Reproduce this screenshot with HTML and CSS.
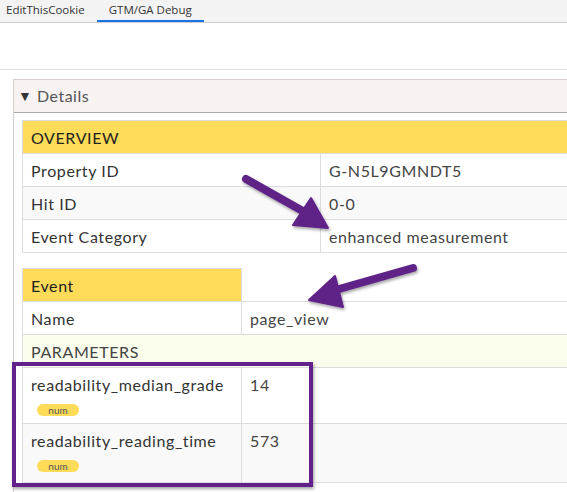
FILE: index.html
```html
<!DOCTYPE html>
<html>
<head>
    <link rel="stylesheet" href="styles.css">
</head>
<body>
    <div class="tabs">
        <div class="tab">EditThisCookie</div>
        <div class="tab active">GTM/GA Debug</div>
    </div>
    <div class="toolbar"></div>

    <div class="page">
        <div class="panel">
            <div class="panel-head"><span class="caret">&#9660;</span> Details</div>

            <table class="grid overview">
                <tr class="head"><td colspan="2">OVERVIEW</td></tr>
                <tr><td class="key">Property ID</td><td class="val">G-N5L9GMNDT5</td></tr>
                <tr class="alt"><td class="key">Hit ID</td><td class="val">0-0</td></tr>
                <tr><td class="key">Event Category</td><td class="val">enhanced measurement</td></tr>
            </table>

            <table class="grid event">
                <tr class="head"><td>Event</td><td class="blank"></td></tr>
                <tr><td class="key">Name</td><td class="val">page_view</td></tr>
                <tr class="section"><td colspan="2">PARAMETERS</td></tr>
                <tr class="param">
                    <td class="key">readability_median_grade<span class="badge">num</span></td>
                    <td class="val">14</td>
                </tr>
                <tr class="param alt last">
                    <td class="key">readability_reading_time<span class="badge">num</span></td>
                    <td class="val">573</td>
                </tr>
            </table>
        </div>

        <!-- annotations -->
        <div class="highlight"></div>
        <svg class="arrows" width="567" height="492" viewBox="0 0 567 492">
            <defs>
                <filter id="shade" x="-20%" y="-20%" width="140%" height="140%">
                    <feDropShadow dx="1" dy="2" stdDeviation="1.5" flood-color="#000" flood-opacity="0.35"/>
                </filter>
            </defs>
            <g fill="#5f2287" stroke="#5f2287" stroke-linecap="round" stroke-linejoin="round" filter="url(#shade)">
                <line x1="246" y1="179" x2="308" y2="214" stroke-width="8"/>
                <polygon points="328,228 293,225 311,198" stroke-width="2"/>
                <line x1="413" y1="268" x2="332" y2="291" stroke-width="8"/>
                <polygon points="309,300 335,276 343,307" stroke-width="2"/>
            </g>
        </svg>
    </div>
</body>
</html>
```

FILE: styles.css
```css
:root {
    --yellow: #fedb58;
    --line: #dddddd;
    --purple: #62218b;
    --text: #333333;
}
body {
    margin: 0;
    width: 567px;
    height: 492px;
    overflow: hidden;
    background: #fff;
    font-family: Lato, "Noto Sans", sans-serif;
    color: var(--text);
}
.tabs {
    display: flex;
    height: 22px;
    background: #f3f3f3;
    border-bottom: 1px solid #cccccc;
    font-family: "Open Sans", sans-serif;
    font-size: 11.5px;
}
.tab {
    padding: 0 6px;
    line-height: 20px;
    color: #333;
}
.tab.active {
    margin-left: 6px;
    padding: 0 12px;
    border-bottom: 2px solid #1a73e8;
}
.toolbar {
    height: 46px;
    border-bottom: 1px solid #dddddd;
}
.page {
    position: relative;
}
.panel {
    margin: 9px 0 0 13px;
    width: 640px;
    height: 420px;
    border-left: 1px solid #d6cccc;
    border-top: 1px solid #d6cccc;
}
.panel-head {
    height: 32px;
    line-height: 32px;
    padding-left: 4px;
    background: #f8f2f2;
    border-bottom: 1px solid #aaaaaa;
    font-size: 16px;
    letter-spacing: 0.5px;
    color: #555;
}
.caret {
    font-size: 14px;
    color: #333;
    vertical-align: 1px;
}
.grid {
    border-collapse: collapse;
    margin-left: 8px;
    width: 620px;
    font-size: 16px;
    letter-spacing: 0.6px;
}
.grid td {
    border: 1px solid var(--line);
    height: 33px;
    padding: 0 8px;
    box-sizing: border-box;
}
.overview {
    margin-top: 7px;
}
.overview td.key {
    width: 298px;
}
.event {
    margin-top: 15px;
}
.event td.key {
    width: 219px;
}
.grid .head td {
    background: var(--yellow);
    color: #222;
}
.grid .head td.blank {
    background: #fff;
    border-top-color: #fff;
    border-right-color: #fff;
}
.grid .val {
    color: #444;
}
.grid tr.alt td {
    background: #f9f9f9;
}
.grid .section td {
    background: #fafcec;
    color: #444;
}
.grid .param td {
    height: 56px;
    vertical-align: top;
    padding-top: 7px;
}
.grid .param.last td {
    height: 59px;
}
.badge {
    display: block;
    width: 42px;
    margin: 10px 0 0 6px;
    background: var(--yellow);
    border-radius: 6px;
    font-size: 10px;
    letter-spacing: 0;
    line-height: 12px;
    text-align: center;
    color: #555;
}
.highlight {
    position: absolute;
    left: 12px;
    top: 283px;
    width: 293px;
    height: 117px;
    border: 4px solid var(--purple);
    box-shadow: 1px 2px 3px rgba(0, 0, 0, 0.35);
}
.arrows {
    position: absolute;
    left: 0;
    top: -79px;
    pointer-events: none;
}
```
